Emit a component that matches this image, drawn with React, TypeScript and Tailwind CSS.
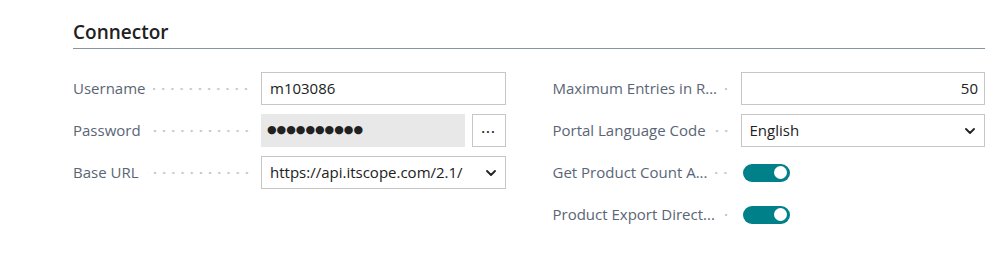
import { ReactNode } from "react";

function Chevron() {
  return (
    <svg width="10" height="6" viewBox="0 0 10 6" className="shrink-0">
      <path d="M1 1l4 4 4-4" fill="none" stroke="#212121" strokeWidth="1.8" strokeLinecap="round" strokeLinejoin="round" />
    </svg>
  );
}

function Toggle() {
  return (
    <div className="ml-[2px] flex h-[18px] w-[47px] items-center justify-end rounded-full bg-[#00818a] pr-[3px]">
      <div className="h-[13px] w-[13px] rounded-full bg-white" />
    </div>
  );
}

function Row({ label, children }: { label: string; children: ReactNode }) {
  return (
    <div className="flex h-[33px] items-center">
      <div className="flex w-[188px] shrink-0 items-center pr-[10px]">
        <span className="whitespace-nowrap text-[15px] text-[#5a6576]">{label}</span>
        <span className="ml-[8px] h-[4px] min-w-0 flex-1 bg-[radial-gradient(circle,#c9c9c9_1px,transparent_1.6px)] bg-[length:9.2px_4px] bg-right bg-repeat-x" />
      </div>
      <div className="flex min-w-0 flex-1 items-center">{children}</div>
    </div>
  );
}

export default function App() {
  return (
    <div className="h-[265px] bg-white pl-[73px] pr-[15px] pt-[20px] font-['Open_Sans',sans-serif] text-[#212121]">
      <h2 className="border-b border-[#8893a0] pb-[4px] text-[19px] font-semibold leading-[24px]">
        Connector
      </h2>

      <div className="mt-[23px] grid grid-cols-2 gap-x-[47px]">
        <div className="flex flex-col gap-[9px]">
          <Row label="Username">
            <div className="flex h-[33px] w-full items-center border border-[#c6c6c6] px-[8px] text-[15px]">
              m103086
            </div>
          </Row>
          <Row label="Password">
            <div className="flex h-[33px] flex-1 items-center bg-[#e8e8e8] px-[6px] font-['DejaVu_Sans',sans-serif] text-[11px] tracking-[0px]">
              ●●●●●●●●●●
            </div>
            <button className="ml-[7px] flex h-[33px] w-[34px] items-center justify-center border border-[#c6c6c6] bg-white pb-[6px] text-[14px] font-semibold leading-none tracking-[1px]">
              ...
            </button>
          </Row>
          <Row label="Base URL">
            <div className="flex h-[33px] w-full items-center justify-between border border-[#c6c6c6] pl-[8px] pr-[9px] text-[15px]">
              <span>https://api.itscope.com/2.1/</span>
              <Chevron />
            </div>
          </Row>
        </div>

        <div className="flex flex-col gap-[9px]">
          <Row label="Maximum Entries in R...">
            <div className="flex h-[33px] w-full items-center justify-end border border-[#c6c6c6] px-[6px] text-[15px]">
              50
            </div>
          </Row>
          <Row label="Portal Language Code">
            <div className="flex h-[33px] w-full items-center justify-between border border-[#c6c6c6] pl-[8px] pr-[9px] text-[15px]">
              <span>English</span>
              <Chevron />
            </div>
          </Row>
          <Row label="Get Product Count A...">
            <Toggle />
          </Row>
          <Row label="Product Export Direct...">
            <Toggle />
          </Row>
        </div>
      </div>
    </div>
  );
}
